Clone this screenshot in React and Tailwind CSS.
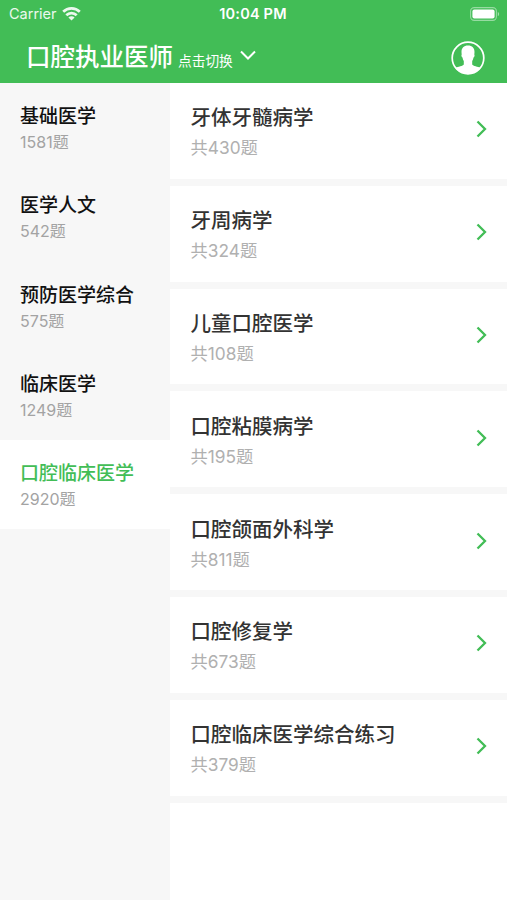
import React, { useState } from 'react';

const categories = [
  { name: '基础医学', count: 1581 },
  { name: '医学人文', count: 542 },
  { name: '预防医学综合', count: 575 },
  { name: '临床医学', count: 1249 },
  { name: '口腔临床医学', count: 2920 },
];

const chapters = [
  { name: '牙体牙髓病学', count: 430 },
  { name: '牙周病学', count: 324 },
  { name: '儿童口腔医学', count: 108 },
  { name: '口腔粘膜病学', count: 195 },
  { name: '口腔颌面外科学', count: 811 },
  { name: '口腔修复学', count: 673 },
  { name: '口腔临床医学综合练习', count: 379 },
];

const WifiIcon = () => (
  <svg className="w-[19px] h-[14px]" viewBox="0 0 19 14" fill="none" stroke="currentColor" strokeWidth="2.7">
    <path d="M1.2 4.8a11.8 11.8 0 0 1 16.6 0" />
    <path d="M4.3 8.2a7.4 7.4 0 0 1 10.4 0" />
    <path d="M9.5 13.6 6.4 10.5a4.4 4.4 0 0 1 6.2 0Z" fill="currentColor" stroke="none" />
  </svg>
);

const BatteryIcon = () => (
  <svg className="w-[30px] h-[14px]" viewBox="0 0 30 14" fill="none">
    <rect x="0.6" y="0.6" width="25.8" height="12.8" rx="3.6" stroke="white" strokeOpacity="0.45" strokeWidth="1.1" />
    <rect x="2.4" y="2.4" width="22.2" height="9.2" rx="2" fill="white" />
    <path d="M27.8 4.9c1.8.6 1.8 3.6 0 4.2Z" fill="white" fillOpacity="0.5" />
  </svg>
);

const AvatarIcon = () => (
  <svg className="w-[34px] h-[34px]" viewBox="0 0 34 34">
    <circle cx="17" cy="17" r="15.8" fill="none" stroke="white" strokeWidth="1.7" />
    <path
      d="M17 4.6c-4.2 0-6.5 2.5-6.5 6.3 0 1 .2 1.8.2 2.6-.6.6-.2 2.6.8 3 .3 1.5.6 2.6 1.3 3.4v3.5c-.8 1.5-5.6 2-8.6 3.6A15.8 15.8 0 0 0 17 32.8a15.8 15.8 0 0 0 12.8-5.8c-3-1.6-7.8-2.1-8.6-3.6v-3.5c.7-.8 1-1.9 1.3-3.4 1-.4 1.4-2.4.8-3 0-.8.2-1.6.2-2.6 0-3.8-2.3-6.3-6.500-6.300Z"
      fill="white"
    />
  </svg>
);

const CategoryItem = ({ name, count, active, onClick }) => (
  <li
    className={`h-[89.3px] pl-5 pt-5 cursor-pointer ${active ? 'bg-white text-[#42bd56]' : 'text-[#111111]'}`}
    onClick={onClick}
  >
    <div className="text-[19px] leading-[28px] font-medium whitespace-nowrap">{name}</div>
    <div className="text-[16px] leading-[22px] text-[#a3a3a3]">{count}题</div>
  </li>
);

const ChapterItem = ({ name, count }) => (
  <li className="h-[102.8px] pl-[20.5px] pr-5 border-b-[7px] border-[#f7f7f7] flex items-center justify-between">
    <div className="pt-[5px]">
      <div className="text-[20.5px] leading-[30px] font-medium text-[#333333] whitespace-nowrap">{name}</div>
      <div className="text-[17.3px] leading-[30px] text-[#b0b0b0]">共{count}题</div>
    </div>
    <svg className="w-[11px] h-[18px] mb-[3px]" viewBox="0 0 11 18" fill="none" stroke="#42bd56" strokeWidth="2.3">
      <path d="m1.5 1.5 7.5 7.5-7.5 7.5" />
    </svg>
  </li>
);

export default function App() {
  const [selected, setSelected] = useState(4);

  return (
    <div className="w-[507px] h-[900px] flex flex-col overflow-hidden bg-white font-['Inter','Noto_Sans_CJK_SC',sans-serif]">
      <header className="h-[83px] shrink-0 bg-[#42bd56] text-white">
        <div className="h-[27px] pl-[9px] pr-[7px] grid grid-cols-3 items-center">
          <div className="flex items-center gap-[5px] text-[14.5px] text-white/90">
            Carrier
            <WifiIcon />
          </div>
          <div className="text-center text-[14.5px] font-semibold tracking-[0.2px] pr-[3px]">10:04 PM</div>
          <div className="flex justify-end">
            <BatteryIcon />
          </div>
        </div>
        <div className="h-[56px] pl-[26px] pr-[22px] flex items-center justify-between">
          <div className="flex items-baseline pt-[3px]">
            <h1 className="text-[24.5px] leading-[36px] font-medium">口腔执业医师</h1>
            <span className="ml-[5px] text-[13.7px]">点击切换</span>
            <svg className="ml-[7px] mb-1 w-4 h-[10px] self-center" viewBox="0 0 16 10" fill="none" stroke="currentColor" strokeWidth="2">
              <path d="m1 1.5 7 7 7-7" />
            </svg>
          </div>
          <div className="pt-[5px]">
            <AvatarIcon />
          </div>
        </div>
      </header>
      <main className="flex flex-1 min-h-0">
        <ul className="w-[170px] shrink-0 bg-[#f7f7f7]">
          {categories.map((item, index) => (
            <CategoryItem
              key={item.name}
              {...item}
              active={index === selected}
              onClick={() => setSelected(index)}
            />
          ))}
        </ul>
        <ul className="flex-1 bg-white">
          {chapters.map((item) => (
            <ChapterItem key={item.name} {...item} />
          ))}
        </ul>
      </main>
    </div>
  );
}
